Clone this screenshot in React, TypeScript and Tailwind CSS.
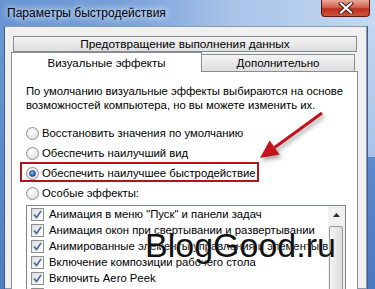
import React from 'react';

const font = "font-['Liberation_Sans',Arial,sans-serif]";

const effects = [
  'Анимация в меню "Пуск" и панели задач',
  'Анимация окон при свертывании и развертывании',
  'Анимированные элементы управления и элементы внутри окна',
  'Включение композиции рабочего стола',
  'Включить Aero Peek',
  'Включить прозрачность',
];

function Radio({ checked }: { checked?: boolean }) {
  return (
    <span className="w-[13px] h-[13px] shrink-0 rounded-full border border-[#8f8f8f] bg-[radial-gradient(circle_at_40%_35%,#ffffff,#e4e4e4_70%,#cfcfcf)] flex items-center justify-center">
      {checked && (
        <span className="w-[7px] h-[7px] rounded-full bg-[radial-gradient(circle_at_40%_35%,#8cc4f2,#2a64b2_60%,#173f7a)] border border-[#1c4d8c]" />
      )}
    </span>
  );
}

function CheckBox() {
  return (
    <span className="w-[13px] h-[13px] shrink-0 border border-[#8e8f8f] bg-[linear-gradient(135deg,#dcdcdc,#ffffff)] flex items-center justify-center">
      <svg width="9" height="9" viewBox="0 0 9 9">
        <path d="M1 4.5 L3.5 7.5 L8 1" fill="none" stroke="#4a61a8" strokeWidth="1.6" />
      </svg>
    </span>
  );
}

function RadioRow({ label, checked }: { label: string; checked?: boolean }) {
  return (
    <div className="flex items-center h-[20px]">
      <Radio checked={checked} />
      <span className="ml-[3px] leading-[14px] whitespace-nowrap">{label}</span>
    </div>
  );
}

export default function App() {
  return (
    <div className={`${font} relative w-[375px] h-[289px] overflow-hidden flex flex-col bg-[#5c89cb] text-[12px] text-black`}>
      {/* title bar */}
      <div className="h-[26px] shrink-0 flex bg-[linear-gradient(90deg,#6693d3_0%,#79a2da_35%,#a9c4e9_62%,#c4d8f1_100%)]">
        <div className="self-center pl-[7px] [text-shadow:0_0_6px_#e6f0fb,0_0_10px_#e6f0fb]">Параметры быстродействия</div>
        <div className="ml-auto mr-[5px] w-[49px] h-[17px] rounded-b-[4px] border border-t-0 border-[#5a1812] bg-[linear-gradient(180deg,#e9a898_0%,#d3644f_45%,#b8301c_55%,#d0553c_100%)] flex items-center justify-center">
          <svg width="16" height="12" viewBox="0 0 16 12">
            <path d="M3 1.5 L13 10.5 M13 1.5 L3 10.5" stroke="#3a1a14" strokeWidth="4" strokeLinecap="square" />
            <path d="M3 1.5 L13 10.5 M13 1.5 L3 10.5" stroke="#ffffff" strokeWidth="2.2" strokeLinecap="square" />
          </svg>
        </div>
      </div>

      <div className="flex flex-1 min-h-0">
        <div className="w-[5px] shrink-0 bg-[linear-gradient(180deg,#6a96d4,#4f7dc2)] border-r border-[#3d5f93]" />
        {/* dialog body */}
        <div className="flex-1 border border-[#8c9ab0] border-l-0 bg-[#f0f0f0] pt-[9px]">
          {/* tab row 1 */}
          <div className="ml-[8px] w-[344px] h-[16px] border border-[#898c95] bg-[linear-gradient(180deg,#f4f4f4,#dedede)] flex items-center justify-center leading-[14px] text-[11.8px]">
            Предотвращение выполнения данных
          </div>
          {/* tab row 2 */}
          <div className="ml-[6px] h-[19px] flex items-end text-[11.5px]">
            <div className="relative z-10 -mb-px w-[191px] h-[20px] border border-b-0 border-[#898c95] bg-white flex items-center justify-center leading-[14px]">
              Визуальные эффекты
            </div>
            <div className="w-[153px] h-[17px] border border-l-0 border-b-0 border-[#898c95] bg-[linear-gradient(180deg,#f4f4f4,#dedede)] flex items-center justify-center leading-[14px]">
              Дополнительно
            </div>
          </div>
          {/* tab panel */}
          <div className="ml-[6px] w-[347px] h-[240px] border border-[#898c95] bg-white pt-[12px] pl-[14px] text-[11.3px]">
            <p className="leading-[14px] whitespace-nowrap">
              По умолчанию визуальные эффекты выбираются на основе
              <br />
              возможностей компьютера, но вы можете изменить их.
            </p>
            <div className="mt-[11px]">
              <RadioRow label="Восстановить значения по умолчанию" />
              <RadioRow label="Обеспечить наилучший вид" />
              <RadioRow label="Обеспечить наилучшее быстродействие" checked />
              <RadioRow label="Особые эффекты:" />
            </div>
            {/* effects list */}
            <div className="mt-[2px] w-[320px] h-[120px] border border-[#828790] flex">
              <div className="flex-1 min-w-0 overflow-hidden pl-[4px]">
                {effects.map((e) => (
                  <div key={e} className="h-[16px] flex items-center whitespace-nowrap">
                    <CheckBox />
                    <span className="ml-[5px] leading-[14px]">{e}</span>
                  </div>
                ))}
              </div>
              <div className="w-[17px] shrink-0 bg-[#f0f0f0] flex flex-col">
                <div className="h-[17px] flex items-center justify-center">
                  <svg width="7" height="4" viewBox="0 0 7 4">
                    <path d="M0 4 L3.5 0 L7 4 Z" fill="#2b2b2b" />
                  </svg>
                </div>
                <div className="mt-[3px] ml-[1px] w-[14px] h-[90px] rounded-[2px] border border-[#9b9b9b] bg-[linear-gradient(90deg,#f4f4f4,#dcdcdc)]" />
              </div>
            </div>
          </div>
        </div>
        <div className="w-[8px] shrink-0 flex flex-col border-l border-[#3f5f8f]">
          <div className="h-[131px] bg-[linear-gradient(180deg,#c2d6f0,#a8c2e8)]" />
          <div className="flex-1 bg-[linear-gradient(180deg,#5d8bd0,#4a79c3)]" />
        </div>
      </div>

      {/* annotation: highlight box */}
      <div className="absolute left-[20px] top-[162px] w-[239px] h-[20px] border-2 border-[#b2141c]" />

      {/* annotation: arrow */}
      <svg className="absolute left-[250px] top-[105px] [filter:drop-shadow(2px_3px_2px_rgba(0,0,0,0.35))]" width="80" height="65" viewBox="0 0 80 65">
        <path d="M72 8 L24.6 42.5" stroke="#c3121b" strokeWidth="3" />
        <path d="M10 53 L29.6 49.5 L19.6 35.5 Z" fill="#c3121b" />
      </svg>

      {/* watermark */}
      <div className="absolute left-[145px] top-[228px] text-[34px] leading-[34px] text-[#111] [text-shadow:0_0_2px_#fff]">
        BlogGood.ru
      </div>
    </div>
  );
}
